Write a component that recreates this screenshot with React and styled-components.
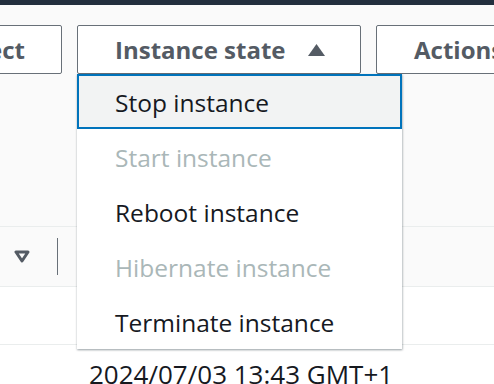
import React from "react";
import styled, { createGlobalStyle } from "styled-components";

const GlobalStyle = createGlobalStyle`
  html, body {
    margin: 0;
    padding: 0;
    background: #fafafa;
    font-family: "Open Sans", "Noto Sans", Arial, sans-serif;
    overflow: hidden;
  }
  * { box-sizing: border-box; }
`;

const Page = styled.div`
  width: 494px;
  height: 384px;
  overflow: hidden;
  background: #fafafa;
`;

const TopBar = styled.div`
  height: 5px;
  background: #232f3e;
`;

const Toolbar = styled.div`
  display: flex;
  gap: 15px;
  margin: 20px 0 0 -45px;
  height: 49px;
`;

const Button = styled.button`
  position: relative;
  flex: none;
  height: 49px;
  display: flex;
  align-items: center;
  gap: 21px;
  padding: 0 36px 0 37px;
  width: ${(p) => p.$w}px;
  border: 1px solid #687078;
  border-radius: 2px;
  background: #ffffff;
  color: #545b64;
  font-family: inherit;
  font-size: 24px;
  font-weight: 700;
  white-space: nowrap;
  justify-content: ${(p) => (p.$end ? "flex-end" : "flex-start")};
`;

const Caret = styled.svg`
  width: 19px;
  height: 14px;
  flex: none;
`;

const Menu = styled.ul`
  position: absolute;
  top: 48px;
  left: -1px;
  width: 325px;
  margin: 0;
  padding: 0;
  list-style: none;
  background: #ffffff;
  box-shadow: 0 1px 2px 0 rgba(0, 28, 36, 0.3), 1px 1px 2px 0 rgba(0, 28, 36, 0.15);
  z-index: 5;
  text-align: left;
`;

const Item = styled.li`
  height: 55px;
  display: flex;
  align-items: center;
  padding-left: ${(p) => (p.$active ? 36 : 38)}px;
  padding-top: 1px;
  font-size: 24.5px;
  font-weight: 400;
  color: ${(p) => (p.$disabled ? "#aab7b8" : "#16191f")};
  background: ${(p) => (p.$active ? "#f2f3f3" : "#ffffff")};
  border: ${(p) => (p.$active ? "2px solid #0073bb" : "none")};
`;

const Table = styled.div`
  margin-top: 152px;
  border-top: 1px solid #eaeded;
`;

const Row = styled.div`
  display: grid;
  grid-template-columns: 58px 1fr;
  height: ${(p) => p.$h}px;
  background: ${(p) => (p.$header ? "#fafafa" : "#ffffff")};
  border-bottom: 1px solid #eaeded;
`;

const HeadCell = styled.div`
  display: flex;
  align-items: center;
  justify-content: space-between;
  padding-left: 14px;
`;

const Divider = styled.span`
  width: 1px;
  height: 37px;
  background: #687078;
`;

const Cell = styled.div`
  padding: 11px 0 0 31px;
  font-size: 26px;
  color: #16191f;
  white-space: nowrap;
`;

const items = [
  { label: "Stop instance", active: true },
  { label: "Start instance", disabled: true },
  { label: "Reboot instance" },
  { label: "Hibernate instance", disabled: true },
  { label: "Terminate instance" },
];

export default function App() {
  return (
    <Page>
      <GlobalStyle />
      <TopBar />
      <Toolbar>
        <Button $w={107} $end>Connect</Button>
        <Button $w={284}>
          Instance state
          <Caret viewBox="0 0 19 14">
            <path d="M9.5 1 L18 13 L1 13 Z" fill="#545b64" />
          </Caret>
          <Menu>
            {items.map((it) => (
              <Item key={it.label} $active={it.active} $disabled={it.disabled}>
                {it.label}
              </Item>
            ))}
          </Menu>
        </Button>
        <Button $w={180}>Actions</Button>
      </Toolbar>
      <Table>
        <Row $header $h={60}>
          <HeadCell>
            <svg width="16" height="13" viewBox="0 0 16 13">
              <path d="M2 2 L14 2 L8 11 Z" fill="none" stroke="#545b64" strokeWidth="3" strokeLinejoin="round" />
            </svg>
            <Divider />
          </HeadCell>
          <div />
        </Row>
        <Row $h={58}>
          <div />
          <div />
        </Row>
        <Row $h={60}>
          <div />
          <Cell>2024/07/03 13:43 GMT+1</Cell>
        </Row>
      </Table>
    </Page>
  );
}
